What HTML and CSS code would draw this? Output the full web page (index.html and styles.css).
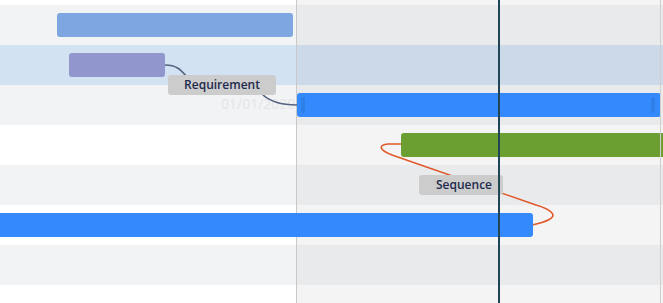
FILE: index.html
```html
<!DOCTYPE html>
<html lang="en">
<head>
    <meta charset="UTF-8">
    <meta name="viewport" content="width=device-width, initial-scale=1.0">
    <title>Gantt</title>
    <link rel="stylesheet" href="styles.css">
</head>
<body>
    <div class="chart">
        <!-- baris latar -->
        <div class="rows">
            <div class="row row-top"><div class="left"></div><div class="right"></div></div>
            <div class="row odd"><div class="left"></div><div class="right"></div></div>
            <div class="row selected"><div class="left"></div><div class="right"></div></div>
            <div class="row odd"><div class="left"><span class="date">01/01/2020</span></div><div class="right"></div></div>
            <div class="row"><div class="left"></div><div class="right"></div></div>
            <div class="row odd"><div class="left"></div><div class="right"></div></div>
            <div class="row"><div class="left"></div><div class="right"></div></div>
            <div class="row odd"><div class="left"></div><div class="right"></div></div>
            <div class="row row-end"><div class="left"></div><div class="right"></div></div>
        </div>

        <!-- garis penghubung -->
        <svg class="links" width="663" height="303" viewBox="0 0 663 303">
            <path d="M165,65 C177,65 181,70 187,77 L262,94 C270,102 282,105 297,105" fill="none" stroke="#56647f" stroke-width="1.6"/>
            <path d="M532,225 C546,222 556,218 552,213 C549,209 543,207 536,205 L392,155 C379,150 378,145 388,144 L401,144" fill="none" stroke="#e0582a" stroke-width="1.6"/>
        </svg>

        <!-- bar tugas -->
        <div class="bar bar-a"></div>
        <div class="bar bar-b"></div>
        <div class="bar bar-c"><span class="handle handle-l"></span><span class="handle handle-r"></span></div>
        <div class="bar bar-d"></div>
        <div class="bar bar-e"></div>

        <div class="tag tag-req">Requirement</div>
        <div class="tag tag-seq">Sequence</div>

        <div class="today"></div>
        <div class="edge"></div>
    </div>
</body>
</html>
```

FILE: styles.css
```css
body {
    margin: 0;
    background: #fff;
    font-family: "Open Sans", "Liberation Sans", sans-serif;
}

.chart {
    position: relative;
    width: 663px;
    height: 303px;
    overflow: hidden;
}

/* CSS untuk baris */
.rows {
    display: flex;
    flex-direction: column;
}

.row {
    display: flex;
    height: 40px;
}

.row-top {
    height: 5px;
}

.row-end {
    height: 18px;
}

.row .left {
    width: 296px;
    background: #fff;
    border-right: 1px solid #c9c9c9;
    position: relative;
}

.row .right {
    flex: 1;
    background: #f4f4f4;
}

.row.odd .left {
    background: #f2f3f5;
}

.row.odd .right {
    background: #e9eaec;
}

.row.selected .left {
    background: #d3e2f3;
}

.row.selected .right {
    background: #ccd9e8;
}

.date {
    position: absolute;
    left: 221px;
    top: 9px;
    font-size: 14px;
    color: #e3e5e9;
}

.links {
    position: absolute;
    left: 0;
    top: 0;
}

/* CSS untuk bar */
.bar {
    position: absolute;
    height: 24px;
    border-radius: 3px;
}

.bar-a {
    left: 57px;
    top: 13px;
    width: 236px;
    background: #7ea6e0;
}

.bar-b {
    left: 69px;
    top: 53px;
    width: 96px;
    background: #9196cc;
}

.bar-c {
    left: 297px;
    top: 93px;
    width: 364px;
    background: #3489fd;
}

.bar-d {
    left: 401px;
    top: 133px;
    width: 280px;
    background: #6c9f32;
}

.bar-e {
    left: -10px;
    top: 213px;
    width: 543px;
    background: #3489fd;
}

.handle {
    position: absolute;
    top: 4px;
    width: 4px;
    height: 16px;
    border-radius: 2px;
    background: #2f7fe9;
}

.handle-l {
    left: 4px;
}

.handle-r {
    right: 6px;
}

.tag {
    position: absolute;
    height: 20px;
    line-height: 20px;
    border-radius: 3px;
    background: #cccccc;
    color: #1e2a4d;
    font-size: 12px;
    font-weight: 600;
    text-align: center;
}

.tag-req {
    left: 168px;
    top: 75px;
    width: 108px;
}

.tag-seq {
    left: 419px;
    top: 175px;
    width: 84px;
    padding-left: 6px;
    box-sizing: border-box;
}

.today {
    position: absolute;
    left: 498px;
    top: 0;
    width: 2px;
    height: 303px;
    background: #1f4556;
}

.edge {
    position: absolute;
    left: 660px;
    top: 0;
    width: 1px;
    height: 303px;
    background: #cfcfcf;
}
```
